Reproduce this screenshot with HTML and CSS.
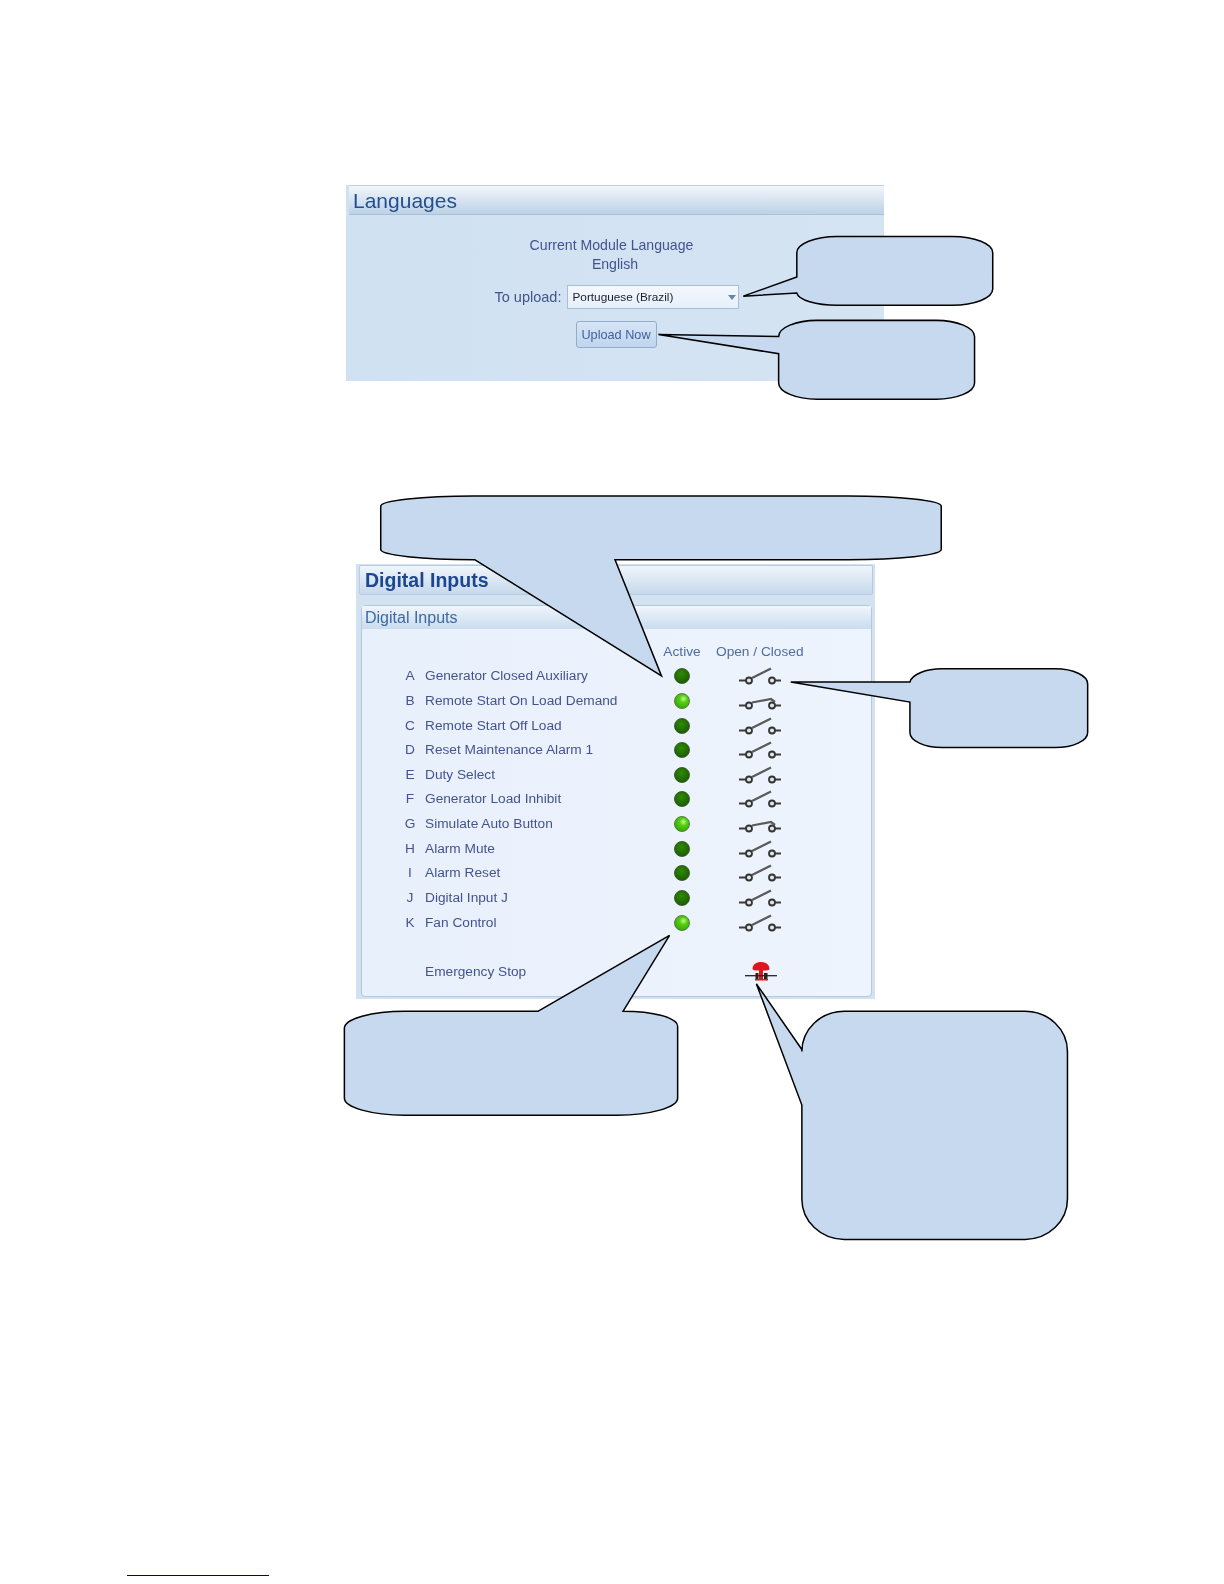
FILE: index.html
```html
<!DOCTYPE html>
<html lang="en">
<head>
<meta charset="utf-8">
<title>Languages and Digital Inputs</title>
<link rel="stylesheet" href="styles.css">
</head>
<body>
<svg width="0" height="0" class="defs">
  <defs>
    <g id="sw-base">
      <path d="M0 13.500H7M36 13.500H42" stroke="#3a3a3a" stroke-width="1.900" fill="none"/>
      <circle cx="10" cy="13.500" r="3" fill="#dfe4ea" stroke="#333" stroke-width="1.800"/>
      <circle cx="33" cy="13.500" r="3" fill="#dfe4ea" stroke="#333" stroke-width="1.800"/>
    </g>
    <symbol id="sw-open" viewBox="0 0 42 18">
      <use href="#sw-base"/>
      <path d="M13 11L32 1.500" stroke="#5a5a5a" stroke-width="2.200" fill="none"/>
    </symbol>
    <symbol id="sw-closed" viewBox="0 0 42 18">
      <use href="#sw-base"/>
      <path d="M13 10.500L32 7L36 10" stroke="#5a5a5a" stroke-width="2.200" fill="none"/>
    </symbol>
  </defs>
</svg>
<div class="page">
  <section class="languages">
    <h2 class="lang-title">Languages</h2>
    <div class="lang-body">
      <p class="lang-line lang-current">Current Module Language</p>
      <p class="lang-line">English</p>
      <div class="upload-row">
        <span class="upload-label">To upload:</span>
        <div class="select"><span>Portuguese (Brazil)</span><i class="caret"></i></div>
      </div>
      <button class="upload-btn" type="button">Upload Now</button>
    </div>
  </section>

  <section class="digital">
    <h1 class="digital-title">Digital Inputs</h1>
    <div class="sub">
      <h2 class="sub-title">Digital Inputs</h2>
      <div class="grid">
        <div class="row head"><span></span><span></span><span class="c-active">Active</span><span class="c-state">Open / Closed</span></div>
        <div class="row"><span>A</span><span>Generator Closed Auxiliary</span><i class="led"></i><svg class="sw"><use href="#sw-open"/></svg></div>
        <div class="row"><span>B</span><span>Remote Start On Load Demand</span><i class="led on"></i><svg class="sw"><use href="#sw-closed"/></svg></div>
        <div class="row"><span>C</span><span>Remote Start Off Load</span><i class="led"></i><svg class="sw"><use href="#sw-open"/></svg></div>
        <div class="row"><span>D</span><span>Reset Maintenance Alarm 1</span><i class="led"></i><svg class="sw"><use href="#sw-open"/></svg></div>
        <div class="row"><span>E</span><span>Duty Select</span><i class="led"></i><svg class="sw"><use href="#sw-open"/></svg></div>
        <div class="row"><span>F</span><span>Generator Load Inhibit</span><i class="led"></i><svg class="sw"><use href="#sw-open"/></svg></div>
        <div class="row"><span>G</span><span>Simulate Auto Button</span><i class="led on"></i><svg class="sw"><use href="#sw-closed"/></svg></div>
        <div class="row"><span>H</span><span>Alarm Mute</span><i class="led"></i><svg class="sw"><use href="#sw-open"/></svg></div>
        <div class="row"><span>I</span><span>Alarm Reset</span><i class="led"></i><svg class="sw"><use href="#sw-open"/></svg></div>
        <div class="row"><span>J</span><span>Digital Input J</span><i class="led"></i><svg class="sw"><use href="#sw-open"/></svg></div>
        <div class="row"><span>K</span><span>Fan Control</span><i class="led on"></i><svg class="sw"><use href="#sw-open"/></svg></div>
        <div class="row estop"><span></span><span>Emergency Stop</span><span></span>
          <svg class="stop" viewBox="0 0 36 22">
            <path d="M9.500 8C9.500 3.500 13.500 1 18 1S26.500 3.500 26.500 8C26.500 9 24 9.500 20 9.500V18H16V9.500C12 9.500 9.500 9 9.500 8Z" fill="#e0141c"/>
            <path d="M2 14.700H34" stroke="#222" stroke-width="1.300"/>
            <path d="M12.500 12H15.500V18H12.500ZM21 12H24.500V18H21Z" fill="#222"/>
            <path d="M12 18H25V19.500H12Z" fill="#e0141c"/>
          </svg>
        </div>
      </div>
    </div>
  </section>

  <div class="foot-rule"></div>

  <svg class="callouts" viewBox="0 0 1212 1568">
    <path d="M789 274L736 293L789 290A40 13 0 0 0 829 302H943A40 16 0 0 0 983 286V250A40 16 0 0 0 943 234H829A40 16 0 0 0 789 250Z"/>
    <path d="M771 333L652 331L771 350V379A38 16 0 0 0 809 395H927A38 16 0 0 0 965 379V333A38 16 0 0 0 927 317H809A38 16 0 0 0 771 333Z"/>
    <path d="M470 554L655 669L609 554H840A92 10 0 0 0 932 544V501A92 10 0 0 0 840 491H469A92 10 0 0 0 377 501V544A92 10 0 0 0 469 554Z"/>
    <path d="M901 675L783 675L901 695V725A32 15 0 0 0 933 740H1045A32 15 0 0 0 1077 725V677A32 15 0 0 0 1045 662H933A32 15 0 0 0 901 675Z"/>
    <path d="M533 1001L663 926L617 1001A54 15 0 0 1 671 1016V1087A60 17 0 0 1 611 1104H401A60 17 0 0 1 341 1087V1018A60 17 0 0 1 401 1001Z"/>
    <path d="M794 1039L749 974L794 1094V1187A42 40 0 0 0 836 1227H1015A42 40 0 0 0 1057 1187V1041A42 40 0 0 0 1015 1001H836A42 40 0 0 0 794 1041Z"/>
  </svg>
</div>
</body>
</html>
```
FILE: styles.css
```css
html, body { margin: 0; padding: 0; background: #fff; }
.defs { position: absolute; }
.page {
  position: relative;
  width: 1224px;
  height: 1584px;
  overflow: hidden;
  font-family: "Liberation Sans", Arial, sans-serif;
  color: #44538f;
  display: flow-root;
}
p, h1, h2 { margin: 0; font-weight: normal; }

/* Languages panel */
.languages {
  margin: 185px 0 0 346px;
  width: 538px;
  height: 196px;
  background: linear-gradient(90deg, #d0e1f1, #d4e4f3);
  filter: blur(0.35px);
}
.lang-title {
  height: 30px;
  box-sizing: border-box;
  margin-left: 3px;
  padding-left: 4px;
  font-size: 21px;
  line-height: 29px;
  color: #24508f;
  background: linear-gradient(#f2f6fb, #bcd2e7);
  border-bottom: 1px solid #a9c0d8;
  border-top: 1px solid #c3d0e0;
}
.lang-body { display: flex; flex-direction: column; align-items: center; padding-top: 21px; }
.lang-line { font-size: 14.100px; line-height: 19px; width: 100%; text-align: center; }
.lang-current { padding-right: 7px; box-sizing: border-box; }
.upload-row { display: flex; align-items: center; gap: 6px; margin-top: 11px; margin-left: 4px; }
.upload-label { font-size: 14.500px; }
.select {
  width: 172px;
  height: 24px;
  box-sizing: border-box;
  padding: 0 2px 0 4px;
  display: flex;
  align-items: center;
  justify-content: space-between;
  font-size: 11.800px;
  color: #1d1d2a;
  background: linear-gradient(#f4f8fd, #e6eff9);
  border: 1px solid #a9bdd4;
}
.caret { width: 0; height: 0; border: 4px solid transparent; border-top: 5px solid #5f87b2; border-bottom: 0; }
.upload-btn {
  margin-top: 12px;
  margin-left: 2px;
  width: 81px;
  height: 27px;
  padding: 0;
  font: 12.700px "Liberation Sans", Arial, sans-serif;
  color: #44609c;
  background: linear-gradient(#d6e5f6, #bfd5ee);
  border: 1px solid #93acc9;
  border-radius: 3px;
}

/* Digital inputs panel */
.digital {
  margin: 183px 0 0 356px;
  width: 519px;
  height: 435px;
  box-sizing: border-box;
  padding: 1px 2px 2px 3px;
  background: #d3e2f1;
  filter: blur(0.35px);
}
.digital-title {
  height: 30px;
  font-size: 19.500px;
  line-height: 28px;
  font-weight: bold;
  padding-left: 5px;
  color: #1d4691;
  background: linear-gradient(#f0f5fb, #c6d9ec);
  border: 1px solid #b8cbdf;
  border-radius: 2px;
  box-sizing: border-box;
}
.sub {
  margin: 10px 1px 0 2px;
  height: 392px;
  box-sizing: border-box;
  background: linear-gradient(90deg, #e8f0fc, #eef4fd);
  border: 1px solid #b4c7db;
  border-radius: 4px;
}
.sub-title {
  height: 23px;
  padding-left: 3px;
  font-size: 16px;
  line-height: 23px;
  color: #3d6aa3;
  background: linear-gradient(#f0f5fb, #c9dcef);
}
.grid { padding: 10px 0 0 38px; }
.row {
  display: grid;
  grid-template-columns: 20px 249px 26px 1fr;
  align-items: center;
  height: 24.640px;
  font-size: 13.700px;
}
.row > span { margin-bottom: 1px; }
.row > span:first-child { text-align: center; }
.row > span:nth-child(2) { padding-left: 5px; }
.head { color: #4f6aa5; height: 25px; }
.c-active { justify-self: center; white-space: nowrap; }
.c-state { margin-left: 21px; white-space: nowrap; }
.led {
  justify-self: center;
  width: 16px;
  height: 16px;
  box-sizing: border-box;
  border-radius: 50%;
  border: 1px solid #37582c;
  background: radial-gradient(circle at 45% 35%, #2f8a06, #1c6000 75%);
}
.led.on {
  border-color: #4d7d3a;
  background: radial-gradient(circle at 60% 35%, #a8f070 0 8%, #55cf12 30%, #36a004 85%);
}
.sw { display: block; width: 42px; height: 18px; margin-left: 44px; }
.estop { margin-top: 24.640px; }
.stop { width: 36px; height: 22px; margin-left: 48.400px; }

.foot-rule {
  margin: 576px 0 0 127px;
  width: 142px;
  height: 1px;
  background: #00008b;
}

/* Callout balloons lie over the panels */
.callouts {
  position: absolute;
  left: 0;
  top: 0;
  width: 1224px;
  height: 1584px;
  fill: #c6d9ef;
  stroke: #000;
  stroke-width: 1.500;
  stroke-linejoin: miter;
}
```
